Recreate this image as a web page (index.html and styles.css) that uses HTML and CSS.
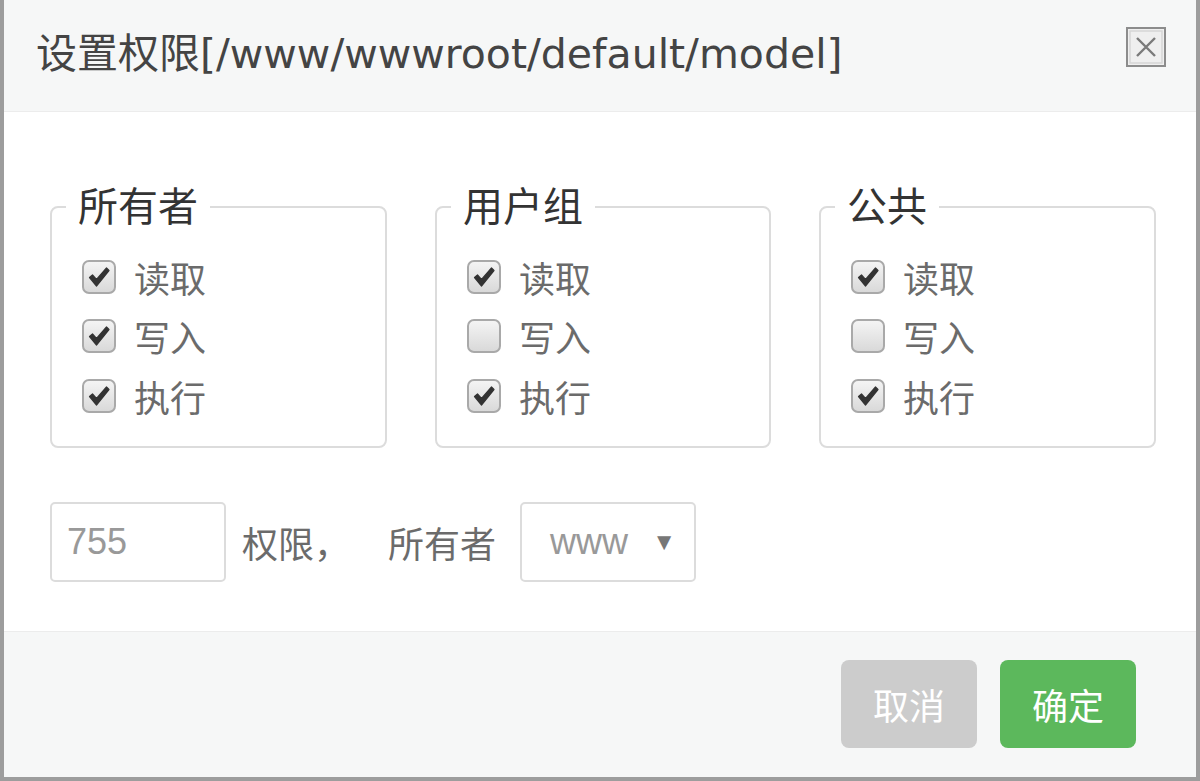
FILE: index.html
```html
<!DOCTYPE html>
<html lang="zh-CN">
<head>
    <meta charset="UTF-8">
    <title>设置权限</title>
    <link rel="stylesheet" href="styles.css">
</head>
<body>
    <div class="dialog">
        <!-- title bar -->
        <div class="dialog-head">
            <span class="dialog-title">设置权限[/www/wwwroot/default/model]</span>
            <a class="close" href="#" title="关闭">
                <svg width="40" height="40" viewBox="0 0 40 40">
                    <rect x="1" y="1" width="38" height="38" fill="#efefef" stroke="#8c8c8c" stroke-width="2"/>
                    <rect x="4" y="4" width="32" height="32" fill="none" stroke="#d6d6d6" stroke-width="1.5"/>
                    <path d="M11 11 L29 29 M29 11 L11 29" stroke="#7a7a7a" stroke-width="2.4" fill="none"/>
                </svg>
            </a>
        </div>

        <div class="dialog-body">
            <!-- permission groups -->
            <div class="groups">
                <fieldset class="group">
                    <legend>所有者</legend>
                    <div class="checks">
                        <label class="check on"><span class="box"></span>读取</label>
                        <label class="check on"><span class="box"></span>写入</label>
                        <label class="check on"><span class="box"></span>执行</label>
                    </div>
                </fieldset>
                <fieldset class="group">
                    <legend>用户组</legend>
                    <div class="checks">
                        <label class="check on"><span class="box"></span>读取</label>
                        <label class="check"><span class="box"></span>写入</label>
                        <label class="check on"><span class="box"></span>执行</label>
                    </div>
                </fieldset>
                <fieldset class="group">
                    <legend>公共</legend>
                    <div class="checks">
                        <label class="check on"><span class="box"></span>读取</label>
                        <label class="check"><span class="box"></span>写入</label>
                        <label class="check on"><span class="box"></span>执行</label>
                    </div>
                </fieldset>
            </div>

            <!-- numeric value + owner -->
            <div class="access-row">
                <input class="num" type="text" value="755">
                <span class="row-text">权限，</span>
                <span class="row-text owner">所有者</span>
                <div class="select">
                    <span>www</span>
                    <span class="arrow">&#9660;</span>
                </div>
            </div>
        </div>

        <div class="dialog-foot">
            <button class="btn btn-gray">取消</button>
            <button class="btn btn-green">确定</button>
        </div>
    </div>
</body>
</html>
```

FILE: styles.css
```css
body {
    margin: 0;
    background-color: #9d9d9d;
    font-family: "DejaVu Sans", "Noto Sans CJK SC", sans-serif;
}
.dialog {
    margin: 0 4px 4px 4px;
    height: 777px;
    background-color: #fff;
    display: flex;
    flex-direction: column;
}
.dialog-head {
    height: 111px;
    background-color: #f6f7f7;
    border-bottom: 1px solid #ececec;
    display: flex;
    align-items: center;
    justify-content: space-between;
    padding: 0 30px 0 32px;
}
.dialog-title {
    font-size: 41px;
    color: #444;
    margin-top: -12px;
}
.close {
    display: block;
    width: 40px;
    height: 40px;
    margin-top: -18px;
}
.close svg {
    display: block;
}
.dialog-body {
    flex: 1;
    padding: 75px 40px 0 46px;
}
.groups {
    display: grid;
    grid-template-columns: 337px 336px 337px;
    gap: 48px;
}
.group {
    margin: 0;
    padding: 20px 0 20px 14px;
    border: 2px solid #dcdcdc;
    border-radius: 8px;
    min-width: 0;
}
.group legend {
    padding: 0 12px;
    font-size: 40px;
    line-height: 40px;
    color: #333;
}
.checks {
    padding-left: 16px;
}
.check {
    display: flex;
    align-items: center;
    height: 59.5px;
    font-size: 36px;
    color: #6b6b6b;
}
.box {
    width: 30px;
    height: 30px;
    border: 2px solid #a9a9a9;
    border-radius: 7px;
    background: linear-gradient(#f4f4f4, #d9d9d9);
    margin-right: 18px;
    flex-shrink: 0;
    position: relative;
}
.check.on .box::after {
    content: "";
    position: absolute;
    left: 3px;
    top: 3px;
    width: 24px;
    height: 24px;
    background: url("data:image/svg+xml;utf8,<svg xmlns='http://www.w3.org/2000/svg' viewBox='0 0 24 24'><path d='M2.5 12.5 L5.5 10 L9.5 14.5 L19.5 3 L22 5.5 L9.5 21 Z' fill='%23333' stroke='%23333' stroke-width='1.2' stroke-linejoin='round'/></svg>") no-repeat center / contain;
}
.access-row {
    display: flex;
    align-items: center;
    margin-top: 54px;
}
.num {
    box-sizing: border-box;
    width: 176px;
    height: 80px;
    border: 2px solid #dcdcdc;
    border-radius: 5px;
    padding: 0 0 0 15px;
    font-family: "Liberation Sans", sans-serif;
    font-size: 36px;
    color: #999;
    outline: none;
}
.row-text {
    font-size: 36px;
    color: #6b6b6b;
    margin-left: 16px;
}
.row-text.owner {
    margin-left: 38px;
}
.select {
    box-sizing: border-box;
    width: 176px;
    height: 80px;
    margin-left: 24px;
    border: 2px solid #dcdcdc;
    border-radius: 5px;
    display: flex;
    align-items: center;
    justify-content: space-between;
    padding: 0 18px 0 28px;
    font-family: "Liberation Sans", sans-serif;
    font-size: 36px;
    color: #999;
}
.select .arrow {
    font-size: 24px;
    color: #777;
}
.dialog-foot {
    height: 146px;
    background-color: #f6f7f7;
    border-top: 1px solid #ececec;
    display: flex;
    justify-content: flex-end;
    align-items: flex-start;
    padding: 28px 60px 0 0;
    box-sizing: border-box;
    gap: 23px;
}
.btn {
    width: 136px;
    height: 88px;
    border: none;
    border-radius: 8px;
    font-family: "Noto Sans CJK SC", sans-serif;
    font-size: 36px;
    color: #fff;
    cursor: pointer;
}
.btn-gray {
    background-color: #cccccc;
}
.btn-green {
    background-color: #5cb85c;
}
```
